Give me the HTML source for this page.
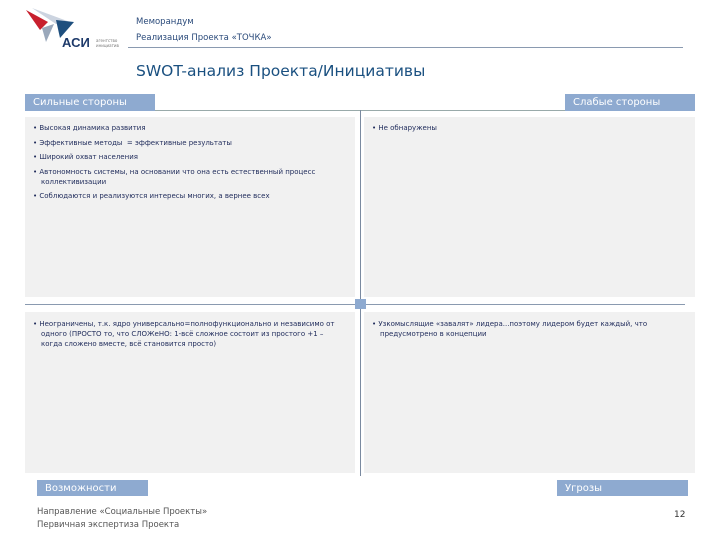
<!DOCTYPE html>
<html><head><meta charset="utf-8"><style>
body{margin:0;width:720px;height:540px;background:#fff;position:relative;overflow:hidden;font-family:"DejaVu Sans","Liberation Sans",sans-serif}
.a{position:absolute}
.hd{position:absolute;background:#8eaad0;color:#fff;font-size:10px;line-height:17px;padding-left:8px;box-sizing:border-box}
.p{position:absolute;background:#f1f1f1}
.t{position:absolute;font-size:7px;color:#1e2a5a;line-height:10px}
.t div{margin-bottom:4.5px;padding-left:8px;text-indent:-8px}
</style></head><body>
<svg class="a" style="left:26px;top:8px" width="100" height="42">
<polygon points="0,2 22,14 14,22" fill="#c8202e"/>
<polygon points="6,0 44,14 30,16" fill="#ccd4e0"/>
<polygon points="30,12 48,14 34,30" fill="#1e4f7e"/>
<polygon points="16,20 28,16 20,34" fill="#9aa8bb"/>
<text x="36" y="39" font-size="13" font-weight="bold" fill="#1e3a6a" font-family="Liberation Sans">АСИ</text>
<text x="70" y="34" font-size="4" fill="#777">агентство</text>
<text x="70" y="39" font-size="4" fill="#777">инициатив</text>
</svg>
<div class="a" style="left:136px;top:17px;font-size:8.5px;color:#2a4a7a">Меморандум</div>
<div class="a" style="left:136px;top:33px;font-size:8.5px;color:#2a4a7a">Реализация Проекта «ТОЧКА»</div>
<div class="a" style="left:128px;top:47px;width:555px;height:1px;background:#8a9ab0"></div>
<div class="a" style="left:136px;top:62px;font-size:15.5px;color:#1a5080">SWOT-анализ Проекта/Инициативы</div>
<div class="hd" style="left:25px;top:94px;width:130px;height:17px">Сильные стороны</div>
<div class="hd" style="left:565px;top:94px;width:130px;height:17px">Слабые стороны</div>
<div class="a" style="left:155px;top:110px;width:410px;height:1px;background:#9aa"></div>
<div class="p" style="left:25px;top:117px;width:330px;height:180px"></div>
<div class="p" style="left:364px;top:117px;width:331px;height:180px"></div>
<div class="p" style="left:25px;top:312px;width:330px;height:161px"></div>
<div class="p" style="left:364px;top:312px;width:331px;height:161px"></div>
<div class="a" style="left:360px;top:110px;width:1px;height:366px;background:#7a8aa0"></div>
<div class="a" style="left:25px;top:304px;width:660px;height:1px;background:#8a9ab0"></div>
<div class="a" style="left:355px;top:299px;width:11px;height:10px;background:#8eaad0"></div>
<div class="t" style="left:33px;top:123px;width:300px">
<div>• Высокая динамика развития</div>
<div>• Эффективные методы &nbsp;= эффективные результаты</div>
<div>• Широкий охват населения</div>
<div>• Автономность системы, на основании что она есть естественный процесс коллективизации</div>
<div>• Соблюдаются и реализуются интересы многих, а вернее всех</div>
</div>
<div class="t" style="left:372px;top:123px;width:300px"><div>• Не обнаружены</div></div>
<div class="t" style="left:33px;top:319px;width:310px"><div>• Неограничены, т.к. ядро универсально=полнофункционально и независимо от одного (ПРОСТО то, что СЛОЖеНО: 1-всё сложное состоит из простого +1 – когда сложено вместе, всё становится просто)</div></div>
<div class="t" style="left:372px;top:319px;width:300px"><div>• Узкомыслящие «завалят» лидера...поэтому лидером будет каждый, что предусмотрено в концепции</div></div>
<div class="hd" style="left:37px;top:480px;width:111px;height:16px">Возможности</div>
<div class="hd" style="left:557px;top:480px;width:131px;height:16px">Угрозы</div>
<div class="a" style="left:37px;top:506px;font-size:8.5px;color:#555;line-height:13px">Направление «Социальные Проекты»<br>Первичная экспертиза Проекта</div>
<div class="a" style="left:674px;top:510px;font-size:9px;color:#333">12</div>
</body></html>
